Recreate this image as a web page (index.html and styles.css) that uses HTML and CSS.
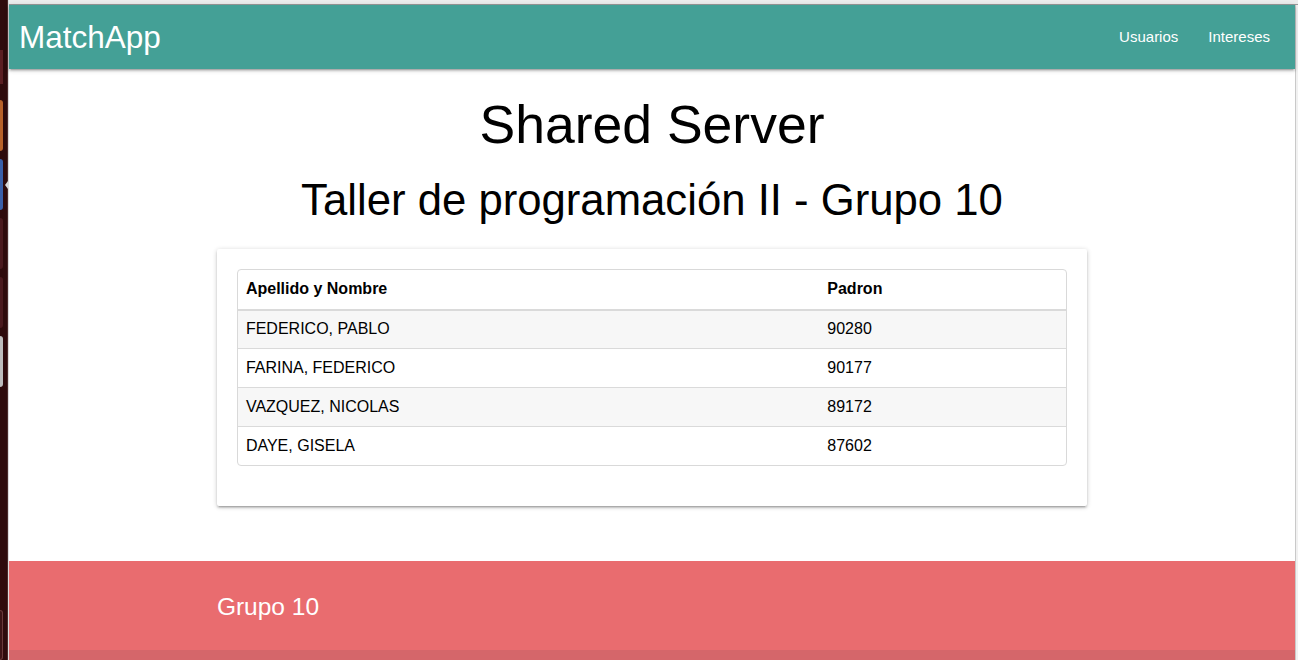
FILE: index.html
```html
<!DOCTYPE html>
<html lang="es">
<head>
<meta charset="utf-8">
<title>MatchApp</title>
<link rel="stylesheet" href="styles.css">
</head>
<body>
<div class="desktop">
  <aside class="launcher">
    <span class="tile tile-first"></span>
    <span class="tile tile-orange"></span>
    <span class="tile tile-blue"><i class="active-arrow"></i></span>
    <span class="tile tile-dark"></span>
    <span class="tile tile-dark"></span>
    <span class="tile tile-grey"></span>
    <span class="launcher-spacer"></span>
    <span class="tile tile-last"></span>
  </aside>
  <div class="browser">
    <div class="chrome-top"></div>
    <div class="viewport">
      <div class="page">
        <nav class="navbar">
          <a class="brand" href="#">MatchApp</a>
          <ul class="nav-links">
            <li><a href="#">Usuarios</a></li>
            <li><a href="#">Intereses</a></li>
          </ul>
        </nav>
        <main class="content">
          <h1 class="title">Shared Server</h1>
          <h2 class="subtitle">Taller de programación II - Grupo 10</h2>
          <div class="container">
            <section class="card">
              <div class="table-wrap">
                <table class="members">
                  <thead>
                    <tr><th class="col-name">Apellido y Nombre</th><th>Padron</th></tr>
                  </thead>
                  <tbody>
                    <tr class="odd"><td>FEDERICO, PABLO</td><td>90280</td></tr>
                    <tr><td>FARINA, FEDERICO</td><td>90177</td></tr>
                    <tr class="odd"><td>VAZQUEZ, NICOLAS</td><td>89172</td></tr>
                    <tr><td>DAYE, GISELA</td><td>87602</td></tr>
                  </tbody>
                </table>
              </div>
            </section>
          </div>
        </main>
        <footer class="footer">
          <div class="container footer-inner">
            <h5 class="footer-title">Grupo 10</h5>
          </div>
          <div class="footer-copyright"></div>
        </footer>
      </div>
      <div class="scrollbar"></div>
    </div>
  </div>
</div>
</body>
</html>
```

FILE: styles.css
```css
* { box-sizing: border-box; }

html, body {
  margin: 0;
  padding: 0;
  height: 660px;
  overflow: hidden;
  font-family: "Liberation Sans", Arial, sans-serif;
  color: #000;
}

.desktop {
  display: flex;
  height: 660px;
}

/* Ubuntu-like launcher strip */
.launcher {
  width: 8px;
  flex: none;
  background: #2e0b0c;
  display: flex;
  flex-direction: column;
  gap: 8px;
  border-right: 1px solid #4a2a2a;
}
.tile {
  display: block;
  width: 3px;
  height: 51px;
  border-radius: 0 3px 3px 0;
  position: relative;
  flex: none;
}
.tile-first { height: 84px; border-radius: 0; background: linear-gradient(#2e0b0c 0 50px, #5a1f22 50px); }
.tile-orange { background: #b8622a; margin-top: 8px; }
.tile-blue { background: #3a5fa8; }
.tile-dark { background: #4a1a1e; }
.tile-grey { background: #bdbdbd; }
.tile-last { background: #3d1416; border: 1px solid #6a3a3a; border-left: none; height: 50px; }
.launcher-spacer { flex: 1; }
.active-arrow {
  position: absolute;
  left: 5px;
  top: 22px;
  width: 0;
  height: 0;
  border-top: 4px solid transparent;
  border-bottom: 4px solid transparent;
  border-right: 3px solid #d8d8d8;
}

.browser {
  flex: 1;
  display: flex;
  flex-direction: column;
  min-width: 0;
  border-left: 1px solid #dcdcdc;
}
.chrome-top {
  height: 5px;
  flex: none;
  background: #ececec;
  border-bottom: 1px solid #9a9a9a;
}
.viewport {
  flex: 1;
  display: flex;
  min-height: 0;
}
.page {
  flex: 1;
  min-width: 0;
  display: flex;
  flex-direction: column;
  background: #fff;
}
.scrollbar {
  width: 3px;
  flex: none;
  background: #f1f1f1;
  border-left: 1px solid #c9c9c9;
}

/* Navbar */
.navbar {
  height: 64px;
  flex: none;
  background: #44a096;
  display: flex;
  align-items: center;
  justify-content: space-between;
  padding: 0 10px;
  box-shadow: 0 2px 2px 0 rgba(0,0,0,.14), 0 3px 1px -2px rgba(0,0,0,.12), 0 1px 5px 0 rgba(0,0,0,.2);
  position: relative;
  z-index: 1;
}
.brand {
  color: #fff;
  text-decoration: none;
  font-size: 31.5px;
  line-height: 64px;
}
.nav-links {
  list-style: none;
  margin: 0;
  padding: 0;
  display: flex;
}
.nav-links a {
  display: block;
  color: #fff;
  text-decoration: none;
  font-size: 15px;
  line-height: 64px;
  padding: 0 15px;
}

/* Content */
.content {
  text-align: center;
}
.title {
  font-size: 53.5px;
  font-weight: 400;
  line-height: 64px;
  margin: 24px 0 0;
}
.subtitle {
  font-size: 43.7px;
  font-weight: 400;
  line-height: 52px;
  margin: 17px 0 0;
}
.container {
  width: 70%;
  margin: 0 auto;
  padding: 0 15px;
}
.card {
  margin-top: 23px;
  background: #fff;
  padding: 20px 20px 40px;
  border-radius: 2px;
  box-shadow: 0 2px 2px 0 rgba(0,0,0,.14), 0 3px 1px -2px rgba(0,0,0,.12), 0 1px 5px 0 rgba(0,0,0,.2);
  text-align: left;
}
.table-wrap {
  border: 1px solid #d9d9d9;
  border-radius: 4px;
  overflow: hidden;
}
.members {
  width: 100%;
  border-collapse: collapse;
  font-size: 16px;
}
.members th {
  text-align: left;
  font-weight: 700;
  height: 40px;
  padding: 0 8px 2px;
  border-bottom: 2px solid #dadada;
}
.members th.col-name { width: 70.2%; }
.members td {
  height: 39px;
  padding: 0 8px;
  border-top: 1px solid #dadada;
}
.members tbody tr:first-child td { border-top: none; height: 38px; }
.members tr.odd td { background: #f7f7f7; }

/* Footer */
.footer {
  margin-top: 55px;
  background: #e96c6f;
  color: #fff;
}
.footer-inner {
  height: 89px;
  padding-top: 32px;
}
.footer-title {
  margin: 0;
  font-size: 24.5px;
  font-weight: 400;
  line-height: 28px;
}
.footer-copyright {
  height: 20px;
  background: #d5666a;
}
```
